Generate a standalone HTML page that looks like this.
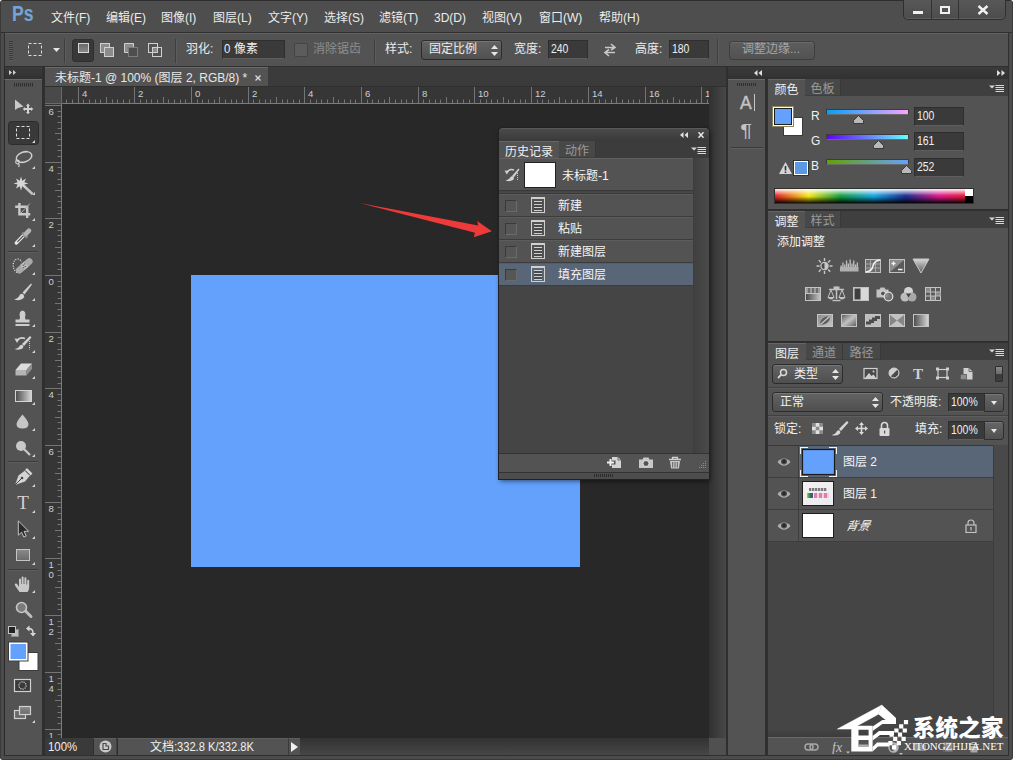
<!DOCTYPE html>
<html lang="zh-CN">
<head>
<meta charset="utf-8">
<title>Photoshop</title>
<style>
*{box-sizing:border-box;margin:0;padding:0}
html,body{width:1013px;height:760px;overflow:hidden;background:#fff}
body{font-family:"Liberation Sans","Noto Sans CJK SC",sans-serif;font-size:12px;color:#e6e6e6;position:relative}
.a{position:absolute}
.t{position:absolute;white-space:nowrap;line-height:14px;font-size:12px}
#win{left:0;top:0;width:1013px;height:760px;background:#4c4c4c;border:1px solid #3a3a3a;border-top-color:#2e2e2e;border-radius:3px}
#work{left:4px;top:66px;width:1005px;height:690px;background:#2f2f2f}
/* menu bar */
#menubar{left:1px;top:1px;width:1011px;height:32px;background:#4e4e4e;border-bottom:1px solid #2f2f2f}
#menubar .t{top:10px;color:#ececec}
#optbar{left:5px;top:33px;width:1003px;height:33px;background:#535353;border-top:1px solid #626262;box-shadow:-1px 0 0 #2f2f2f,1px 0 0 #2f2f2f}
#optbar .t{top:8px;color:#ececec}
.inp{position:absolute;background:#3a3a3a;border:1px solid #2e2e2e;border-bottom-color:#5e5e5e;height:19px;top:6px;color:#f0f0f0;font-size:12px;line-height:17px;padding-left:2px}
.sep{position:absolute;top:5px;width:2px;height:24px;border-left:1px solid #3e3e3e;border-right:1px solid #5d5d5d}
/* toolbox */
#tbhead{left:4px;top:67px;width:38px;height:12px;background:linear-gradient(#3b3b3b,#313131);border-left:1px solid #2a2a2a}
#toolbox{left:4px;top:79px;width:38px;height:676px;background:#535353;border-top:1px solid #6a6a6a;border-left:1px solid #2a2a2a}
/* document */
#tabbar{left:45px;top:67px;width:681px;height:19px;background:#3b3b3b}
#tab{left:45px;top:67px;width:223px;height:19px;background:#535353;border-top:1px solid #6a6a6a}
#rulerh{left:45px;top:87px;width:664px;height:16px;background:#353535}
#rulerv{left:45px;top:87px;width:17px;height:651px;background:#353535}
#canvasbg{left:62px;top:103px;width:647px;height:635px;background:#282828}
#doc{left:191px;top:275px;width:389px;height:292px;background:#64a1fc}
#vscroll{left:709px;top:87px;width:17px;height:651px;background:linear-gradient(90deg,#313131,#484848)}
#statusbar{left:45px;top:738px;width:681px;height:17px;background:#3e3e3e}
/* right dock */
#dockhead{left:728px;top:67px;width:280px;height:12px;background:linear-gradient(#3b3b3b,#313131)}
#iconstrip{left:728px;top:79px;width:37px;height:676px;background:#535353;border-top:1px solid #6a6a6a}
.panel{position:absolute;left:768px;width:240px;background:#535353}
.tabs{position:absolute;left:0;top:0;width:240px;height:17px;background:#3f3f3f}
.tabs .on{position:absolute;top:0;height:17px;background:#535353;color:#f0f0f0;border-top:1px solid #656565}
.tabs .off{position:absolute;top:0;height:16px;background:#484848;color:#9a9a9a;border-right:1px solid #383838}
.tabs span{font-size:12px;line-height:20px;overflow:hidden;text-align:center}
.sel{position:absolute;border:1px solid #2c2c2c;border-radius:3px;background:linear-gradient(#636363,#4f4f4f);box-shadow:inset 0 1px 0 #767676}
.ddb{position:absolute;width:20px;height:19px;border:1px solid #2e2e2e;border-radius:0 3px 3px 0;background:linear-gradient(#666,#505050);box-shadow:inset 0 1px 0 #787878}
.ddb:after{content:"";position:absolute;left:6px;top:7px;border:3.500px solid transparent;border-top:4px solid #e8e8e8;border-bottom:none}
.lrow{position:absolute;left:0;width:225px;height:32px;background:#535353;border-bottom:1px solid #3e3e3e}
.n{display:inline-block;transform:scaleX(.87);transform-origin:0 50%}
.hrow{position:absolute;left:0;width:194px;height:23px;background:#535353;border-bottom:1px solid #3c3c3c;border-top:1px solid #5c5c5c}
.hrow i{position:absolute;left:6px;top:5px;width:12px;height:12px;background:#565656;border:1px solid #3a3a3a;border-right-color:#6a6a6a;border-bottom-color:#6a6a6a}
.hrow b{position:absolute;left:32px;top:2px;width:14px;height:16px;border:1px solid #d0d0d0;border-top-width:2px;background:repeating-linear-gradient(#4a4a4a 0 2px,#d0d0d0 2px 3px);background-clip:content-box;padding:2px 2px 1px 2px}
.hrow .t{left:59px;top:4px;color:#f4f4f4}
</style>
</head>
<body>
<div id="win" class="a"></div>
<div id="work" class="a"></div>

<!-- MENU BAR -->
<div id="menubar" class="a">
<span class="a" id="pslogo" style="left:11px;top:0px;font-size:22px;line-height:26px;font-weight:bold;color:#74a4d9;transform:scaleX(.8);transform-origin:0 50%">Ps</span>
<span class="t" style="left:50px">文件(F)</span>
<span class="t" style="left:105px">编辑(E)</span>
<span class="t" style="left:160px">图像(I)</span>
<span class="t" style="left:212px">图层(L)</span>
<span class="t" style="left:267px">文字(Y)</span>
<span class="t" style="left:323px">选择(S)</span>
<span class="t" style="left:378px">滤镜(T)</span>
<span class="t" style="left:433px">3D(D)</span>
<span class="t" style="left:481px">视图(V)</span>
<span class="t" style="left:538px">窗口(W)</span>
<span class="t" style="left:598px">帮助(H)</span>
<div class="a" id="winbtn" style="left:902px;top:-1px;width:103px;height:20px;border:1px solid #2f2f2f;border-top:none;border-radius:0 0 5px 5px;background:linear-gradient(#585858,#4c4c4c);box-shadow:inset 0 -1px 0 #5e5e5e">
<div class="a" style="left:27px;top:0;width:1px;height:20px;background:#333"></div>
<div class="a" style="left:54px;top:0;width:1px;height:20px;background:#333"></div>
<div class="a" style="left:9px;top:11px;width:10px;height:3px;background:#f0f0f0"></div>
<div class="a" style="left:36px;top:6px;width:10px;height:8px;border:2px solid #f0f0f0"></div>
<svg class="a" style="left:73px;top:5px" width="12" height="10" viewBox="0 0 12 10"><path d="M1.5 1 L10.5 9 M10.5 1 L1.5 9" stroke="#f0f0f0" stroke-width="2.4" fill="none"/></svg>
</div>
</div>

<!-- OPTIONS BAR -->
<div id="optbar" class="a">
<div class="a" style="left:4px;top:7px;width:4px;height:20px;background:repeating-linear-gradient(#3a3a3a 0 1px,#5a5a5a 1px 2px)"></div>
<svg class="a" style="left:22px;top:8px" width="16" height="15" viewBox="0 0 16 15"><rect x="1.5" y="1.5" width="13" height="12" fill="none" stroke="#dcdcdc" stroke-width="1" stroke-dasharray="3 2"/></svg>
<svg class="a" style="left:48px;top:14px" width="7" height="4" viewBox="0 0 7 4"><path d="M0 0H7L3.5 4Z" fill="#e6e6e6"/></svg>
<div class="sep" style="left:59px"></div>
<div class="a" style="left:67px;top:5px;width:22px;height:23px;background:#383838;border:1px solid #2f2f2f;border-radius:3px"></div>
<div class="a" style="left:73px;top:9px;width:11px;height:10px;background:linear-gradient(#6a6a6a,#8a8a8a);border:1px solid #d8d8d8"></div>
<svg class="a" style="left:94px;top:8px" width="16" height="16" viewBox="0 0 16 16"><rect x="1.5" y="1.5" width="9" height="9" fill="#8c8c8c" stroke="#d0d0d0"/><rect x="5.5" y="5.5" width="9" height="9" fill="#8c8c8c" stroke="#d0d0d0"/><rect x="6" y="6" width="4" height="4" fill="#8c8c8c"/></svg>
<svg class="a" style="left:118px;top:8px" width="16" height="16" viewBox="0 0 16 16"><path d="M1.5 1.5H10.5V5.5H5.5V10.5H1.5Z" fill="#8c8c8c" stroke="#d0d0d0"/><rect x="5.5" y="5.5" width="9" height="9" fill="#4e4e4e" stroke="#7d7d7d"/></svg>
<svg class="a" style="left:142px;top:8px" width="16" height="16" viewBox="0 0 16 16"><rect x="1.5" y="1.5" width="9" height="9" fill="none" stroke="#d0d0d0"/><rect x="5.5" y="5.5" width="9" height="9" fill="none" stroke="#d0d0d0"/><rect x="6" y="6" width="4" height="4" fill="#8c8c8c"/></svg>
<div class="sep" style="left:170px"></div>
<span class="t" style="left:181px">羽化:</span>
<div class="inp" style="left:217px;width:63px;padding-left:0"><span class="n" style="transform:scaleX(.95);margin-left:1px">0</span>&nbsp;像素</div>
<div class="a" style="left:289px;top:9px;width:14px;height:14px;background:#5c5c5c;border:1px solid #444;border-radius:2px"></div>
<span class="t" style="left:308px;color:#8e8e8e">消除锯齿</span>
<div class="sep" style="left:369px"></div>
<span class="t" style="left:380px">样式:</span>
<div class="a" style="left:416px;top:6px;width:81px;height:20px;border:1px solid #2c2c2c;border-radius:3px;background:linear-gradient(#636363,#505050);box-shadow:inset 0 1px 0 #757575"></div>
<span class="t" style="left:424px">固定比例</span>
<svg class="a" style="left:486px;top:11px" width="7" height="11" viewBox="0 0 7 11"><path d="M0 4H7L3.5 0Z M0 7H7L3.5 11Z" fill="#e6e6e6"/></svg>
<span class="t" style="left:509px">宽度:</span>
<div class="inp" style="left:543px;width:40px"><span class="n">240</span></div>
<svg class="a" style="left:597px;top:9px" width="16" height="14" viewBox="0 0 16 14"><path d="M3 4.5H12 M9 1L13 4.5L9 7" fill="none" stroke="#c8c8c8" stroke-width="1.6"/><path d="M13 9.5H4 M7 6.5L3 9.5L7 13" fill="none" stroke="#c8c8c8" stroke-width="1.6"/></svg>
<span class="t" style="left:630px">高度:</span>
<div class="inp" style="left:664px;width:40px"><span class="n">180</span></div>
<div class="sep" style="left:712px"></div>
<div class="a" style="left:724px;top:7px;width:86px;height:19px;border:1px solid #3e3e3e;border-radius:3px;background:linear-gradient(#5d5d5d,#525252);box-shadow:inset 0 1px 0 #6a6a6a"></div>
<span class="t" style="left:737px;color:#a4a4a4">调整边缘...</span>
</div>

<!-- TOOLBOX -->
<div id="tbhead" class="a"></div>
<div id="toolbox" class="a"></div>
<!--TOOLS-->
<svg class="a" id="tools" style="left:4px;top:67px" width="38" height="688" viewBox="4 67 38 688">
<defs>
<linearGradient id="gI" x1="0" y1="0" x2="0" y2="1"><stop offset="0" stop-color="#e0e0e0"/><stop offset="1" stop-color="#a8a8a8"/></linearGradient>
<linearGradient id="gH" x1="0" y1="0" x2="1" y2="0"><stop offset="0" stop-color="#4a4a4a"/><stop offset="1" stop-color="#d8d8d8"/></linearGradient>
<linearGradient id="gR" x1="0" y1="0" x2="0" y2="1"><stop offset="0" stop-color="#8a8a8a"/><stop offset="1" stop-color="#6a6a6a"/></linearGradient>
<path id="fly" d="M3 0V3H0Z" fill="#d6d6d6"/>
</defs>
<!-- header chevrons -->
<path d="M9 70L12 72.5L9 75ZM13 70L16 72.5L13 75Z" fill="#d0d0d0"/>
<!-- grip -->
<path d="M14.5 83v3.500M16.500 83v3.500M18.500 83v3.500M20.500 83v3.500M22.500 83v3.500M24.500 83v3.500M26.500 83v3.500M28.500 83v3.500M30.500 83v3.500M32.500 83v3.500" stroke="#2e2e2e" stroke-width="1"/>
<!-- move -->
<path d="M15 99.500L15 110L18 108L23.500 106.500Z" fill="#c9c9c9"/>
<path d="M28 103.500L30 106H29V108H31V107L33.300 109L31 111V110H29V112H30L28 114.300L26 112H27V110H25V111L22.700 109L25 107V108H27V106H26Z" fill="#d2d2d2"/>
<!-- marquee selected -->
<rect x="8.500" y="121.500" width="30" height="23" rx="3" fill="#393939" stroke="#2c2c2c"/>
<rect x="16.500" y="126.500" width="13" height="12" fill="none" stroke="#dedede" stroke-dasharray="3 2"/>
<use href="#fly" x="32" y="140"/>
<!-- lasso -->
<ellipse cx="24" cy="157" rx="8" ry="5" transform="rotate(-18 24 157)" fill="none" stroke="#cfcfcf" stroke-width="1.500"/>
<circle cx="17.500" cy="162" r="1.800" fill="none" stroke="#cfcfcf" stroke-width="1.200"/>
<path d="M18 163.500Q20 165 18.500 167" fill="none" stroke="#cfcfcf" stroke-width="1.200"/>
<use href="#fly" x="32" y="166"/>
<!-- wand -->
<path d="M24 186L32.500 194" stroke="#c4c4c4" stroke-width="2.600"/>
<path d="M21 176.500L22.300 180.800L26 178.500L24.400 182.300L28.500 183.500L24.400 184.600L26 188.500L22.300 186.300L21 190.500L19.700 186.300L16 188.500L17.600 184.600L13.500 183.500L17.600 182.300L16 178.500L19.700 180.800Z" fill="#d6d6d6"/>
<use href="#fly" x="32" y="192"/>
<!-- crop -->
<path d="M19.400 203V214.200H30.300M15.200 206.800H27.200V218" fill="none" stroke="#c9c9c9" stroke-width="2.400"/>
<path d="M21 213L30 203.500" stroke="#a8a8a8" stroke-width="1"/>
<use href="#fly" x="32" y="218"/>
<!-- eyedropper -->
<path d="M16.300 243L24 235" stroke="#e6e6e6" stroke-width="3.400" stroke-linecap="round"/>
<path d="M17.500 241.800L23.500 235.600" stroke="#4a4a4a" stroke-width="1.200"/>
<path d="M22.300 232.600L27.200 237.500" stroke="#8e8e8e" stroke-width="2.600"/>
<path d="M26 233.800L29 230.600" stroke="#b4b4b4" stroke-width="4.600" stroke-linecap="round"/>
<use href="#fly" x="32" y="244"/>
<!-- sep -->
<path d="M8 251.500H38" stroke="#3b3b3b"/><path d="M8 252.500H38" stroke="#5e5e5e"/>
<!-- heal -->
<path d="M17 272.500Q12.500 269 13.300 263.500Q14.500 258.800 18 259Q20.500 259.500 21.500 262" fill="none" stroke="#e8e8e8" stroke-width="1.200" stroke-dasharray="1.100 1.300"/>
<path d="M19.300 270.200L29.300 261.500" stroke="#a9a9a9" stroke-width="6.600" stroke-linecap="round"/>
<path d="M22.300 267.600L26.300 264.100" stroke="#bcbcbc" stroke-width="6.600"/>
<circle cx="23.200" cy="265.200" r=".65" fill="#555"/><circle cx="25.300" cy="266.400" r=".65" fill="#555"/><circle cx="24.700" cy="263.900" r=".65" fill="#555"/><circle cx="23.700" cy="267.700" r=".65" fill="#555"/>
<use href="#fly" x="32" y="272"/>
<!-- brush -->
<path d="M22.500 292.500L31 283.500L32 284.500L24.500 294.500Z" fill="#cfcfcf"/>
<path d="M14 299.500Q18.500 298.500 20 294.500Q21.500 293 23.500 294.500Q25 296.500 23 298.500Q19.500 301.500 14 299.500Z" fill="#d2d2d2"/>
<use href="#fly" x="32" y="298"/>
<!-- stamp -->
<path d="M20 317.500Q18.500 311 22.500 310.500Q26.500 311 25 317.500L25.500 319.500H29.500V322.500H15.500V319.500H19.500Z" fill="#cdcdcd"/>
<rect x="15.500" y="324" width="14" height="2" fill="#cdcdcd"/>
<use href="#fly" x="32" y="324"/>
<!-- history brush -->
<path d="M22 344L30 336L31.500 337.500L24 346Z" fill="#d2d2d2"/>
<path d="M14.500 349Q18.500 348.500 20 345.500Q21.500 344 23 345.500Q24 347 22.500 348.500Q19 350.500 14.500 349Z" fill="#d2d2d2"/>
<path d="M25 338.500Q20 336.500 17 340.500" fill="none" stroke="#d2d2d2" stroke-width="1.600"/>
<path d="M14.500 338.500L19.500 339L17 343Z" fill="#d2d2d2"/>
<path d="M29.500 341V349.500" stroke="#d0d0d0" stroke-width="1" stroke-dasharray="1 1"/>
<use href="#fly" x="32" y="350"/>
<!-- eraser -->
<path d="M15.500 370L21 363.500H32L26.500 370Z" fill="#dcdcdc"/>
<path d="M15.500 370H26.500V375.500H15.500Z" fill="#b4b4b4"/>
<path d="M26.500 370L32 363.500V369L26.500 375.500Z" fill="#8f8f8f"/>
<use href="#fly" x="32" y="376"/>
<!-- gradient -->
<rect x="15.500" y="390.500" width="16" height="11" fill="url(#gH)" stroke="#d4d4d4"/>
<use href="#fly" x="32" y="402"/>
<!-- blur drop -->
<path d="M22.500 414.500Q28.500 421.500 28.500 424Q28.500 428.500 22.500 428.500Q16.500 428.500 16.500 424Q16.500 421.500 22.500 414.500Z" fill="#c6c6c6"/>
<use href="#fly" x="32" y="428"/>
<!-- dodge -->
<path d="M24 449L30 455" stroke="#c8c8c8" stroke-width="2.200"/>
<circle cx="21" cy="446" r="5" fill="#c8c8c8"/>
<use href="#fly" x="32" y="454"/>
<!-- sep -->
<path d="M8 461.500H38" stroke="#3b3b3b"/><path d="M8 462.500H38" stroke="#5e5e5e"/>
<!-- pen -->
<path d="M15 485L18.500 475.500L25 470.500L30 475.500L25 481.500Z" fill="#d4d4d4"/>
<path d="M15 485L21.500 478.500" stroke="#444" stroke-width="1"/>
<circle cx="22" cy="478" r="1.300" fill="#444"/>
<path d="M26 469L31.500 474.500" stroke="#d4d4d4" stroke-width="2.600"/>
<path d="M25.500 471L29.500 475" stroke="#444" stroke-width=".9"/>
<use href="#fly" x="32" y="484"/>
<!-- T -->
<text x="23" y="508.500" font-family="Liberation Serif, serif" font-size="19" fill="#d2d2d2" text-anchor="middle">T</text>
<use href="#fly" x="32" y="510"/>
<!-- path select -->
<path d="M18.300 520.800V535.200L21.600 532.200L23.800 537L26.200 536L24 531.300H28.600Z" fill="#2a2a2a" stroke="#d0d0d0" stroke-width=".9"/>
<use href="#fly" x="32" y="536"/>
<!-- rectangle -->
<rect x="16.500" y="549.500" width="13" height="11" fill="url(#gR)" stroke="#c4c4c4"/>
<use href="#fly" x="32" y="562"/>
<!-- sep -->
<path d="M8 569.500H38" stroke="#3b3b3b"/><path d="M8 570.500H38" stroke="#5e5e5e"/>
<!-- hand -->
<path d="M19.500 592L15 585.500Q14.300 584 15.500 583.600Q16.800 583.400 17.800 585L19 587V579.800Q19 578.600 20 578.600Q21 578.600 21 579.800V584H21.600V577.600Q21.600 576.400 22.600 576.400Q23.600 576.400 23.600 577.600V584H24.400V578.400Q24.400 577.200 25.400 577.200Q26.400 577.200 26.400 578.400V584.500H27.200V581Q27.200 579.800 28.200 579.800Q29.200 579.800 29.200 581V587Q29.200 590 27.500 592Z" fill="#c8c8c8"/>
<use href="#fly" x="32" y="590"/>
<!-- zoom -->
<path d="M25.500 611L31 616.500" stroke="#bdbdbd" stroke-width="3" stroke-linecap="round"/>
<circle cx="21.500" cy="607.500" r="5" fill="#7b7b7b" stroke="#c6c6c6" stroke-width="1.600"/>
<!-- default colors / swap -->
<rect x="11.500" y="629.500" width="7" height="7" fill="#bdbdbd" stroke="#8a8a8a"/>
<rect x="8.500" y="626.500" width="7" height="7" fill="#222" stroke="#c4c4c4"/>
<path d="M28.500 628.500Q33 628.500 33 633" fill="none" stroke="#d8d8d8" stroke-width="1.500"/>
<path d="M26 628.500L29.500 625.500V631.500Z M33 636.500L30 633H36Z" fill="#d8d8d8"/>
<!-- fg/bg -->
<rect x="19" y="652.500" width="19" height="18" fill="#fff" stroke="#3c3c3c" stroke-width="1"/>
<rect x="8.500" y="642" width="19.500" height="19" fill="#fff" stroke="#3c3c3c" stroke-width="1"/>
<rect x="10.500" y="644" width="15.500" height="15" fill="#64a1fc"/>
<!-- quick mask -->
<rect x="14.500" y="679.500" width="16" height="12" fill="#3a3a3a" stroke="#d0d0d0" stroke-width="1.200"/>
<circle cx="22.500" cy="685.500" r="3.600" fill="none" stroke="#f0f0f0" stroke-width="1.100" stroke-dasharray="1.100 1.100"/>
<!-- screen mode -->
<rect x="14.500" y="710.500" width="11" height="8" fill="#6a6a6a" stroke="#d0d0d0" stroke-width="1.200"/>
<rect x="19.500" y="706.500" width="11" height="8" fill="url(#gR)" stroke="#d0d0d0" stroke-width="1.200"/>
<use href="#fly" x="32" y="720"/>
</svg>

<!--/TOOLS-->

<!-- DOCUMENT -->
<div id="tabbar" class="a"></div>
<div id="tab" class="a"><span class="t" style="left:10px;top:3px;color:#e8e8e8">未标题-1 @ 100% (图层 2, RGB/8) *</span><svg class="a" style="left:210px;top:7px" width="6" height="6" viewBox="0 0 6 6"><path d="M.5 .5L5.500 5.500M5.500 .5L.5 5.500" stroke="#dcdcdc" stroke-width="1.300"/></svg></div>
<div id="canvasbg" class="a"></div>
<div id="doc" class="a"></div>
<!--RULER-->
<svg class="a" id="rh" style="left:62px;top:87px" width="647" height="17" viewBox="0 0 647 17">
<rect width="647" height="17" fill="#363636"/>
<path d="M4.5 12.5V16M10.5 12.5V16M16.5 0V16M21.5 12.5V16M27.5 12.5V16M33.5 12.5V16M38.5 12.5V16M44.5 10V16M50.5 12.5V16M55.5 12.5V16M61.5 12.5V16M67.5 12.5V16M72.5 0V16M78.5 12.5V16M84.5 12.5V16M89.5 12.5V16M95.5 12.5V16M101.5 10V16M106.5 12.5V16M112.5 12.5V16M118.5 12.5V16M123.5 12.5V16M129.5 0V16M135.5 12.5V16M140.5 12.5V16M146.5 12.5V16M152.5 12.5V16M157.5 10V16M163.5 12.5V16M169.5 12.5V16M174.5 12.5V16M180.5 12.5V16M186.5 0V16M191.5 12.5V16M197.5 12.5V16M203.5 12.5V16M208.5 12.5V16M214.5 10V16M220.5 12.5V16M225.5 12.5V16M231.5 12.5V16M237.5 12.5V16M242.5 0V16M248.5 12.5V16M254.5 12.5V16M259.5 12.5V16M265.5 12.5V16M271.5 10V16M276.5 12.5V16M282.5 12.5V16M288.5 12.5V16M293.5 12.5V16M299.5 0V16M305.5 12.5V16M310.5 12.5V16M316.5 12.5V16M322.5 12.5V16M327.5 10V16M333.5 12.5V16M339.5 12.5V16M344.5 12.5V16M350.5 12.5V16M356.5 0V16M361.5 12.5V16M367.5 12.5V16M373.5 12.5V16M378.5 12.5V16M384.5 10V16M390.5 12.5V16M395.5 12.5V16M401.5 12.5V16M407.5 12.5V16M412.5 0V16M418.5 12.5V16M424.5 12.5V16M429.5 12.5V16M435.5 12.5V16M441.5 10V16M446.5 12.5V16M452.5 12.5V16M458.5 12.5V16M463.5 12.5V16M469.5 0V16M475.5 12.5V16M480.5 12.5V16M486.5 12.5V16M492.5 12.5V16M497.5 10V16M503.5 12.5V16M509.5 12.5V16M515.5 12.5V16M520.5 12.5V16M526.5 0V16M532.5 12.5V16M537.5 12.5V16M543.5 12.5V16M549.5 12.5V16M554.5 10V16M560.5 12.5V16M566.5 12.5V16M571.5 12.5V16M577.5 12.5V16M583.5 0V16M588.5 12.5V16M594.5 12.5V16M600.5 12.5V16M605.5 12.5V16M611.5 10V16M617.5 12.5V16M622.5 12.5V16M628.5 12.5V16M634.5 12.5V16M639.5 0V16M645.5 12.5V16" stroke="#747474" stroke-width="1" fill="none"/>
<path d="M0 16.5H647" stroke="#7c7c7c" stroke-width="1"/>
<text x="20.0" y="10" font-size="9.6" fill="#cfcfcf" font-family="Liberation Sans, sans-serif">4</text>
<text x="76.0" y="10" font-size="9.6" fill="#cfcfcf" font-family="Liberation Sans, sans-serif">2</text>
<text x="133.0" y="10" font-size="9.6" fill="#cfcfcf" font-family="Liberation Sans, sans-serif">0</text>
<text x="190.0" y="10" font-size="9.6" fill="#cfcfcf" font-family="Liberation Sans, sans-serif">2</text>
<text x="246.0" y="10" font-size="9.6" fill="#cfcfcf" font-family="Liberation Sans, sans-serif">4</text>
<text x="303.0" y="10" font-size="9.6" fill="#cfcfcf" font-family="Liberation Sans, sans-serif">6</text>
<text x="360.0" y="10" font-size="9.6" fill="#cfcfcf" font-family="Liberation Sans, sans-serif">8</text>
<text x="416.0" y="10" font-size="9.6" fill="#cfcfcf" font-family="Liberation Sans, sans-serif">10</text>
<text x="473.0" y="10" font-size="9.6" fill="#cfcfcf" font-family="Liberation Sans, sans-serif">12</text>
<text x="530.0" y="10" font-size="9.6" fill="#cfcfcf" font-family="Liberation Sans, sans-serif">14</text>
<text x="587.0" y="10" font-size="9.6" fill="#cfcfcf" font-family="Liberation Sans, sans-serif">16</text>
<text x="643.0" y="10" font-size="9.6" fill="#cfcfcf" font-family="Liberation Sans, sans-serif">18</text>
</svg>
<svg class="a" id="rv" style="left:45px;top:103px" width="17" height="635" viewBox="0 0 17 635">
<rect width="17" height="635" fill="#363636"/>
<path d="M0 2.5H16M12.5 8.5H16M12.5 13.5H16M12.5 19.5H16M12.5 25.5H16M10 30.5H16M12.5 36.5H16M12.5 42.5H16M12.5 47.5H16M12.5 53.5H16M0 59.5H16M12.5 64.5H16M12.5 70.5H16M12.5 76.5H16M12.5 81.5H16M10 87.5H16M12.5 93.5H16M12.5 98.5H16M12.5 104.5H16M12.5 110.5H16M0 115.5H16M12.5 121.5H16M12.5 127.5H16M12.5 132.5H16M12.5 138.5H16M10 144.5H16M12.5 149.5H16M12.5 155.5H16M12.5 161.5H16M12.5 166.5H16M0 172.5H16M12.5 178.5H16M12.5 183.5H16M12.5 189.5H16M12.5 195.5H16M10 200.5H16M12.5 206.5H16M12.5 212.5H16M12.5 217.5H16M12.5 223.5H16M0 229.5H16M12.5 234.5H16M12.5 240.5H16M12.5 246.5H16M12.5 251.5H16M10 257.5H16M12.5 263.5H16M12.5 268.5H16M12.5 274.5H16M12.5 280.5H16M0 285.5H16M12.5 291.5H16M12.5 297.5H16M12.5 302.5H16M12.5 308.5H16M10 314.5H16M12.5 319.5H16M12.5 325.5H16M12.5 331.5H16M12.5 336.5H16M0 342.5H16M12.5 348.5H16M12.5 353.5H16M12.5 359.5H16M12.5 365.5H16M10 370.5H16M12.5 376.5H16M12.5 382.5H16M12.5 387.5H16M12.5 393.5H16M0 399.5H16M12.5 404.5H16M12.5 410.5H16M12.5 416.5H16M12.5 421.5H16M10 427.5H16M12.5 433.5H16M12.5 438.5H16M12.5 444.5H16M12.5 450.5H16M0 455.5H16M12.5 461.5H16M12.5 467.5H16M12.5 472.5H16M12.5 478.5H16M10 484.5H16M12.5 489.5H16M12.5 495.5H16M12.5 501.5H16M12.5 506.5H16M0 512.5H16M12.5 518.5H16M12.5 523.5H16M12.5 529.5H16M12.5 535.5H16M10 540.5H16M12.5 546.5H16M12.5 552.5H16M12.5 558.5H16M12.5 563.5H16M0 569.5H16M12.5 575.5H16M12.5 580.5H16M12.5 586.5H16M12.5 592.5H16M10 597.5H16M12.5 603.5H16M12.5 609.5H16M12.5 614.5H16M12.5 620.5H16M0 626.5H16M12.5 631.5H16" stroke="#747474" stroke-width="1" fill="none"/>
<path d="M16.5 0V635" stroke="#7c7c7c" stroke-width="1"/>
<text x="3.5" y="12.0" font-size="9.6" fill="#cfcfcf" font-family="Liberation Sans, sans-serif">6</text>
<text x="3.5" y="69.0" font-size="9.6" fill="#cfcfcf" font-family="Liberation Sans, sans-serif">4</text>
<text x="3.5" y="125.0" font-size="9.6" fill="#cfcfcf" font-family="Liberation Sans, sans-serif">2</text>
<text x="3.5" y="182.0" font-size="9.6" fill="#cfcfcf" font-family="Liberation Sans, sans-serif">0</text>
<text x="3.5" y="239.0" font-size="9.6" fill="#cfcfcf" font-family="Liberation Sans, sans-serif">2</text>
<text x="3.5" y="295.0" font-size="9.6" fill="#cfcfcf" font-family="Liberation Sans, sans-serif">4</text>
<text x="3.5" y="352.0" font-size="9.6" fill="#cfcfcf" font-family="Liberation Sans, sans-serif">6</text>
<text x="3.5" y="409.0" font-size="9.6" fill="#cfcfcf" font-family="Liberation Sans, sans-serif">8</text>
<text x="3.5" y="465.0" font-size="9.6" fill="#cfcfcf" font-family="Liberation Sans, sans-serif">1</text>
<text x="3.5" y="474.5" font-size="9.6" fill="#cfcfcf" font-family="Liberation Sans, sans-serif">0</text>
<text x="3.5" y="522.0" font-size="9.6" fill="#cfcfcf" font-family="Liberation Sans, sans-serif">1</text>
<text x="3.5" y="531.5" font-size="9.6" fill="#cfcfcf" font-family="Liberation Sans, sans-serif">2</text>
<text x="3.5" y="579.0" font-size="9.6" fill="#cfcfcf" font-family="Liberation Sans, sans-serif">1</text>
<text x="3.5" y="588.5" font-size="9.6" fill="#cfcfcf" font-family="Liberation Sans, sans-serif">4</text>
<text x="3.5" y="636.0" font-size="9.6" fill="#cfcfcf" font-family="Liberation Sans, sans-serif">1</text>
<text x="3.5" y="645.5" font-size="9.6" fill="#cfcfcf" font-family="Liberation Sans, sans-serif">6</text>
</svg>
<!--/RULER-->
<div class="a" id="rcorner" style="left:45px;top:87px;width:17px;height:17px;background:#494949;border-right:1px solid #6a6a6a;border-bottom:1px solid #6a6a6a"></div>
<div id="vscroll" class="a"></div>
<div id="statusbar" class="a">
<div class="a" style="left:0;top:0;width:48px;height:17px;background:#3a3a3a"></div>
<span class="t n" style="left:3px;top:2px;color:#f0f0f0;transform:scaleX(.95)">100%</span>
<div class="a" style="left:48px;top:0;width:23px;height:17px;background:#535353;border-left:1px solid #2e2e2e;border-top:1px solid #5e5e5e"></div>
<svg class="a" style="left:54px;top:2px" width="13" height="13" viewBox="0 0 13 13"><circle cx="6.500" cy="6.500" r="6" fill="#c9c9c9"/><path d="M4 3.500H7V6H9.500V9.500H4Z" fill="none" stroke="#4a4a4a" stroke-width="1.200"/></svg>
<div class="a" style="left:72px;top:0;width:171px;height:17px;background:#535353;border-left:1px solid #2e2e2e;border-top:1px solid #5e5e5e"></div>
<span class="t" style="left:105px;top:2px;color:#f0f0f0">文档:<span class="n" style="transform:scaleX(.93)">332.8 K/332.8K</span></span>
<div class="a" style="left:243px;top:0;width:12px;height:17px;background:#535353;border-left:1px solid #3a3a3a;border-top:1px solid #5e5e5e"></div>
<svg class="a" style="left:246px;top:4px" width="7" height="10" viewBox="0 0 7 10"><path d="M0 0L7 5L0 10Z" fill="#f0f0f0"/></svg>
<div class="a" style="left:255px;top:0;width:409px;height:17px;background:linear-gradient(#323232,#474747)"></div>
<div class="a" style="left:664px;top:0;width:17px;height:17px;background:#505050"></div>
</div>

<!-- RIGHT DOCK -->
<div id="dockhead" class="a"></div>
<div id="iconstrip" class="a"></div>

<!-- COLOR PANEL -->
<div class="panel" id="pcolor" style="top:79px;height:130px">
<!--PCOLOR-->
<div class="tabs"><span class="on" style="left:0;width:37px">颜色</span><span class="off" style="left:37px;width:36px">色板</span>
<svg class="a" style="left:221px;top:5px" width="15" height="9" viewBox="0 0 15 9"><path d="M0 1.500H6L3 4.500Z" fill="#d8d8d8"/><path d="M6.500 1.500H15M6.500 3.500H15M6.500 5.500H15M6.500 7.500H15" stroke="#d8d8d8" stroke-width="1"/></svg></div>
<div class="a" style="left:15px;top:38px;width:20px;height:19px;background:#fff;border:1px solid #3a3a3a"></div>
<div class="a" style="left:5px;top:28px;width:20px;height:19px;background:#64a1fc;border:1px solid #fff;box-shadow:inset 0 0 0 1px #1e1e1e;outline:1px solid #8c8660"></div>
<span class="t" style="left:43px;top:30px;color:#f0f0f0">R</span>
<span class="t" style="left:43px;top:55px;color:#f0f0f0">G</span>
<span class="t" style="left:43px;top:80px;color:#f0f0f0">B</span>
<div class="a" style="left:58px;top:30px;width:83px;height:6px;background:linear-gradient(90deg,#00a1fc,#ffa1fc);border:1px solid #3c3c3c;border-bottom-color:#6a6a6a"></div>
<div class="a" style="left:58px;top:55px;width:83px;height:6px;background:linear-gradient(90deg,#6400fc,#64fffc);border:1px solid #3c3c3c;border-bottom-color:#6a6a6a"></div>
<div class="a" style="left:58px;top:80px;width:83px;height:6px;background:linear-gradient(90deg,#64a100,#64a1ff);border:1px solid #3c3c3c;border-bottom-color:#6a6a6a"></div>
<svg class="a" style="left:85px;top:36px" width="11" height="9" viewBox="0 0 11 9"><path d="M5.500 .5L10.500 5.500V8.500H.5V5.500Z" fill="#b9b9b9" stroke="#3a3a3a"/></svg>
<svg class="a" style="left:105px;top:61px" width="11" height="9" viewBox="0 0 11 9"><path d="M5.500 .5L10.500 5.500V8.500H.5V5.500Z" fill="#b9b9b9" stroke="#3a3a3a"/></svg>
<svg class="a" style="left:133px;top:86px" width="11" height="9" viewBox="0 0 11 9"><path d="M5.500 .5L10.500 5.500V8.500H.5V5.500Z" fill="#b9b9b9" stroke="#3a3a3a"/></svg>
<div class="inp" style="left:146px;top:28px;width:50px"><span class="n">100</span></div>
<div class="inp" style="left:146px;top:53px;width:50px"><span class="n">161</span></div>
<div class="inp" style="left:146px;top:79px;width:50px"><span class="n">252</span></div>
<svg class="a" style="left:11px;top:83px" width="13" height="12" viewBox="0 0 13 12"><path d="M6.500 0L13 12H0Z" fill="#d6d6d6"/><path d="M6.500 4V8.500M6.500 9.500V11" stroke="#333" stroke-width="1.600"/></svg>
<div class="a" style="left:26px;top:82px;width:14px;height:14px;background:#5b98e6;border:1px solid #fff;outline:1px solid #333"></div>
<div class="a" style="left:6px;top:109px;width:200px;height:16px;border:1px solid #2f2f2f;background:linear-gradient(rgba(255,255,255,.95),rgba(255,255,255,0) 48%,rgba(0,0,0,0) 52%,rgba(0,0,0,.92)),linear-gradient(90deg,#ea2128,#f6e616 17%,#16a13f 33%,#18a6e6 50%,#1f2f92 66%,#df1a8c 83%,#e81c24)"></div>
<div class="a" style="left:197px;top:110px;width:8px;height:7px;background:#fff"></div>
<div class="a" style="left:197px;top:117px;width:8px;height:7px;background:#000"></div>

<!--/PCOLOR-->
</div>
<!-- ADJUST PANEL -->
<div class="panel" id="padj" style="top:211px;height:130px">
<!--PADJ-->
<div class="tabs"><span class="on" style="left:0;width:37px">调整</span><span class="off" style="left:37px;width:36px">样式</span>
<svg class="a" style="left:221px;top:5px" width="15" height="9" viewBox="0 0 15 9"><path d="M0 1.500H6L3 4.500Z" fill="#d8d8d8"/><path d="M6.500 1.500H15M6.500 3.500H15M6.500 5.500H15M6.500 7.500H15" stroke="#d8d8d8" stroke-width="1"/></svg></div>
<span class="t" style="left:9px;top:24px;color:#f4f4f4">添加调整</span>
<svg class="a" style="left:0;top:40px" width="240" height="85" viewBox="768 251 240 85">
<defs>
<linearGradient id="aV" x1="0" y1="0" x2="0" y2="1"><stop offset="0" stop-color="#d8d8d8"/><stop offset="1" stop-color="#5a5a5a"/></linearGradient>
<linearGradient id="aH" x1="0" y1="0" x2="1" y2="0"><stop offset="0" stop-color="#4a4a4a"/><stop offset="1" stop-color="#d8d8d8"/></linearGradient>
<linearGradient id="aD" x1="0" y1="0" x2="1" y2="1"><stop offset="0" stop-color="#5a5a5a"/><stop offset=".5" stop-color="#c2c2c2"/><stop offset="1" stop-color="#5a5a5a"/></linearGradient>
<linearGradient id="aHd" x1="0" y1="0" x2="1" y2="0"><stop offset="0" stop-color="#444"/><stop offset="1" stop-color="#c8c8c8"/></linearGradient><linearGradient id="aV2" x1="0" y1="0" x2="1" y2="1"><stop offset="0" stop-color="#8a8a8a"/><stop offset="1" stop-color="#c8c8c8"/></linearGradient>
</defs>
<!-- row1: brightness -->
<g stroke="#c8c8c8" stroke-width="1.400"><path d="M824.500 258v3M824.500 271v3M816.500 266h3M829.500 266h3M818.800 260.300l2.100 2.100M828.100 269.600l2.100 2.100M830.200 260.300l-2.100 2.100M820.900 269.600l-2.100 2.100"/></g>
<circle cx="824.500" cy="266" r="3.600" fill="#4a4a4a" stroke="#c8c8c8" stroke-width="1.200"/><path d="M824.500 262.400A3.600 3.600 0 0 1 824.500 269.600Z" fill="#c8c8c8"/>
<!-- levels -->
<path d="M840.5 269.5v-4h1.300v4zM842.3 269.5v-7h1.300v7zM844.1 269.5v-5h1.300v5zM845.9 269.5v-9h1.300v9zM847.7 269.5v-6h1.300v6zM849.5 269.5v-10h1.300v10zM851.3 269.5v-6h1.300v6zM853.1 269.5v-9h1.300v9zM854.9 269.5v-5h1.300v5zM856.7 269.5v-7h1.300v7z" fill="#c0c0c0"/>
<path d="M840 267h18.500v4.500H840z" fill="#b0b0b0"/>
<!-- curves -->
<rect x="865.500" y="259.500" width="15" height="13" fill="#6e6e6e" stroke="#c2c2c2"/>
<path d="M865.500 264h15M865.500 268h15M870.500 259.500v13M875.500 259.500v13" stroke="#b0b0b0" stroke-width=".8"/>
<path d="M866 272Q872 271 873 266T880 260" fill="none" stroke="#f0f0f0" stroke-width="1.500"/>
<!-- exposure -->
<rect x="889.500" y="259.500" width="15" height="13" fill="#8c8c8c" stroke="#c2c2c2"/>
<path d="M890 272L904 260V272Z" fill="#5a5a5a"/>
<path d="M891.500 263.500h4M893.500 261.500v4M898 269.500h4.500" stroke="#f4f4f4" stroke-width="1.300"/>
<!-- vibrance -->
<path d="M913 259H929L921 273Z" fill="url(#aV)" stroke="#c8c8c8" stroke-width="1"/>
<!-- row2: hue/sat -->
<rect x="805.500" y="287.500" width="15" height="13" fill="url(#aHd)" stroke="#c4c4c4"/>
<rect x="806" y="288" width="14" height="5" fill="#9a9a9a"/>
<path d="M808 288h2v5h-2zM812 288h2v5h-2zM816 288h2v5h-2z" fill="#6c6c6c"/>
<path d="M806 293.500H820" stroke="#c4c4c4" stroke-width="1"/>
<!-- balance -->
<path d="M836.500 286.500V299M829 289.500H844" stroke="#c2c2c2" stroke-width="1.500"/>
<path d="M833.500 286.500h6v2.500h-6z" fill="#c2c2c2"/>
<path d="M831 290L828 297.500H834ZM842 290L839 297.500H845Z" fill="none" stroke="#c2c2c2" stroke-width="1"/>
<path d="M827.500 297.500H834.500Q831 301.500 827.500 297.500ZM838.500 297.500H845.500Q842 301.500 838.500 297.500Z" fill="#c2c2c2"/>
<path d="M832.500 300.500H840.500" stroke="#c2c2c2" stroke-width="1.400"/>
<!-- b&w -->
<rect x="853.500" y="287.500" width="15" height="13" fill="#d8d8d8" stroke="#c2c2c2"/>
<rect x="854.500" y="288.500" width="6" height="11" fill="#3e3e3e"/>
<!-- photo filter -->
<path d="M876.500 289.500h3l1 -2h4l1 2h3v8h-12z" fill="#c2c2c2"/>
<circle cx="883" cy="293.500" r="2.500" fill="#555" stroke="#eee" stroke-width=".8"/>
<circle cx="888.500" cy="296.500" r="4.300" fill="#7a7a7a" fill-opacity=".8" stroke="#dcdcdc" stroke-width="1.200"/>
<!-- channel mixer -->
<circle cx="908.500" cy="291.500" r="4.500" fill="#d4d4d4"/>
<circle cx="905" cy="297" r="4.500" fill="#bdbdbd"/>
<circle cx="912" cy="297" r="4.500" fill="#a8a8a8"/>
<path d="M906 293.500h5l-2.500 4z" fill="#444"/>
<!-- color lookup -->
<rect x="925.500" y="287.500" width="15" height="13" fill="#5a5a5a" stroke="#c4c4c4"/>
<path d="M926 288h4.500v4H926zM935.500 292h5v4h-5zM930.500 296h5v4h-5z" fill="#8a8a8a"/>
<path d="M925.500 292h15M925.500 296h15M930.500 287.500v13M935.500 287.500v13" stroke="#bdbdbd" stroke-width="1.100"/>
<!-- row3: invert -->
<rect x="817.500" y="314.500" width="15" height="12" fill="url(#aV2)" stroke="#c4c4c4"/>
<ellipse cx="825" cy="320.500" rx="5.500" ry="3.200" transform="rotate(-35 825 320.500)" fill="#5c5c5c"/>
<path d="M821 324L829 317" stroke="#c8c8c8" stroke-width="1.200"/>
<!-- posterize -->
<rect x="841.500" y="314.500" width="15" height="12" fill="url(#aD)" stroke="#c2c2c2"/>
<!-- threshold -->
<rect x="865.500" y="314.500" width="15" height="12" fill="#bdbdbd" stroke="#c4c4c4"/>
<path d="M866 324.500V321.500h3v-2h3v-2h3v-1.500h5V319h-3v2h-3v2h-3v1.500Z" fill="#4c4c4c"/>
<!-- selective color -->
<rect x="889.500" y="314.500" width="15" height="12" fill="#c2c2c2" stroke="#c4c4c4"/>
<path d="M890 315L897 320.500L890 326ZM904 315L897 320.500L904 326Z" fill="#868686"/>
<!-- gradient map -->
<rect x="913.500" y="314.500" width="15" height="12" fill="url(#aH)" stroke="#c2c2c2"/>
</svg>

<!--/PADJ-->
</div>
<!-- LAYERS PANEL -->
<div class="panel" id="player" style="top:343px;height:412px">
<!--PLAYER-->
<div class="tabs"><span class="on" style="left:0;width:38px">图层</span><span class="off" style="left:38px;width:37px">通道</span><span class="off" style="left:75px;width:38px">路径</span>
<svg class="a" style="left:221px;top:5px" width="15" height="9" viewBox="0 0 15 9"><path d="M0 1.500H6L3 4.500Z" fill="#d8d8d8"/><path d="M6.500 1.500H15M6.500 3.500H15M6.500 5.500H15M6.500 7.500H15" stroke="#d8d8d8" stroke-width="1"/></svg></div>
<!-- filter row -->
<div class="sel" style="left:4px;top:21px;width:71px;height:20px"></div>
<svg class="a" style="left:9px;top:25px" width="11" height="11" viewBox="0 0 11 11"><circle cx="6.500" cy="4.500" r="3" fill="none" stroke="#d8d8d8" stroke-width="1.500"/><path d="M4.300 6.700L1 10" stroke="#d8d8d8" stroke-width="1.800"/></svg>
<span class="t" style="left:26px;top:24px;color:#f0f0f0">类型</span>
<svg class="a" style="left:64px;top:26px" width="7" height="11" viewBox="0 0 7 11"><path d="M0 4H7L3.500 0Z M0 7H7L3.500 11Z" fill="#e6e6e6"/></svg>
<svg class="a" style="left:95px;top:24px" width="110" height="14" viewBox="863 367 110 14">
<rect x="864" y="368.500" width="13" height="10" fill="#4a4a4a" stroke="#cfcfcf" stroke-width="1.200"/><path d="M865 378L869 373L871.500 376L873.500 374.500L876 378Z" fill="#cfcfcf"/><circle cx="873.500" cy="371.500" r="1" fill="#cfcfcf"/>
<circle cx="894" cy="373" r="5" fill="#cfcfcf"/><path d="M897.500 369.500A5 5 0 0 1 890.500 376.500Z" fill="#4a4a4a"/><circle cx="894" cy="373" r="5" fill="none" stroke="#cfcfcf" stroke-width="1"/>
<text x="918" y="379" font-family="Liberation Serif, serif" font-weight="bold" font-size="15" fill="#cfcfcf" text-anchor="middle">T</text>
<rect x="938" y="369.500" width="9" height="8" fill="none" stroke="#cfcfcf" stroke-width="1.200"/><path d="M936 367.500h3v3h-3zM946 367.500h3v3h-3zM936 376.500h3v3h-3zM946 376.500h3v3h-3z" fill="#cfcfcf"/>
<path d="M963.500 368H969L972.500 371.500V379.500H966.500V374.500H963.500Z" fill="#d0d0d0"/><path d="M969 368V371.500H972.500" fill="none" stroke="#555" stroke-width=".8"/><rect x="960.500" y="374.500" width="6" height="5" fill="#8e8e8e" stroke="#555" stroke-width=".6"/>
</svg>
<div class="a" style="left:227px;top:23px;width:8px;height:16px;border:1px solid #2e2e2e;border-radius:1px;background:linear-gradient(#8a8a8a 0,#6a6a6a 50%,#3c3c3c 50%,#3c3c3c)"></div>
<div class="a" style="left:0;top:44px;width:240px;height:2px;background:#404040;border-bottom:1px solid #5d5d5d"></div>
<!-- blend row -->
<div class="sel" style="left:4px;top:49px;width:111px;height:20px"></div>
<span class="t" style="left:12px;top:52px;color:#f0f0f0">正常</span>
<svg class="a" style="left:104px;top:54px" width="7" height="11" viewBox="0 0 7 11"><path d="M0 4H7L3.500 0Z M0 7H7L3.500 11Z" fill="#e6e6e6"/></svg>
<span class="t" style="left:122px;top:52px;color:#f0f0f0">不透明度:</span>
<div class="inp" style="left:180px;top:50px;width:37px;height:19px"><span class="n">100%</span></div>
<div class="ddb" style="left:216px;top:50px"></div>
<div class="a" style="left:0;top:72px;width:240px;height:2px;background:#404040;border-bottom:1px solid #5d5d5d"></div>
<!-- lock row -->
<span class="t" style="left:6px;top:79px;color:#f0f0f0">锁定:</span>
<svg class="a" style="left:43px;top:77px" width="82" height="18" viewBox="811 420 82 18">
<rect x="812" y="423" width="11" height="11" fill="#e0e0e0"/><path d="M812 423h3.700v3.700h-3.700zM819.300 423h3.700v3.700h-3.700zM815.700 426.700h3.600v3.600h-3.600zM812 430.300h3.700v3.700h-3.700zM819.300 430.300h3.700v3.700h-3.700z" fill="#8a8a8a"/>
<path d="M839 429L847 421L848.500 422.500L841 431Z" fill="#d8d8d8"/><path d="M831.500 435Q835.500 434.500 837 431Q838.500 429.500 840 431Q841 432.500 839.500 434Q836 436.500 831.500 435Z" fill="#d8d8d8"/>
<path d="M861.500 422L864 425H862.300V427.700H865V426L868 428.500L865 431V429.300H862.300V432H864L861.500 435L859 432H860.700V429.300H858V431L855 428.500L858 426V427.700H860.700V425H859Z" fill="#d8d8d8"/>
<rect x="879.500" y="428" width="10" height="8" rx="1" fill="#d8d8d8"/><path d="M881.500 428V425.500Q881.500 422.500 884.500 422.500Q887.500 422.500 887.500 425.500V428" fill="none" stroke="#d8d8d8" stroke-width="1.600"/><rect x="884" y="430.500" width="1.200" height="3" fill="#555"/>
</svg>
<span class="t" style="left:147px;top:79px;color:#f0f0f0">填充:</span>
<div class="inp" style="left:180px;top:78px;width:37px;height:19px"><span class="n">100%</span></div>
<div class="ddb" style="left:216px;top:78px"></div>
<!-- list -->
<div class="a" style="left:0;top:102px;width:240px;height:292px;background:#454545;border-top:1px solid #383838"></div>
<div class="a" style="left:225px;top:102px;width:15px;height:292px;background:#494949;border-left:1px solid #3c3c3c"></div>
<div class="lrow" style="top:103px;background:#596678"></div>
<div class="lrow" style="top:135px"></div>
<div class="lrow" style="top:167px"></div>
<div class="a" style="left:0;top:103px;width:30px;height:31px;background:#535353"></div><div class="a" style="left:30px;top:103px;width:1px;height:96px;background:#3e3e3e"></div>
<svg class="a eye" style="left:9px;top:114px" width="14" height="10" viewBox="0 0 14 10"><path d="M.5 5Q7 -2.500 13.500 5Q7 12.500 .5 5Z" fill="#adadad"/><circle cx="7" cy="4.600" r="3" fill="#4a4a4a"/><circle cx="7" cy="4.600" r="1.500" fill="#222"/></svg>
<svg class="a eye" style="left:9px;top:146px" width="14" height="10" viewBox="0 0 14 10"><path d="M.5 5Q7 -2.500 13.500 5Q7 12.500 .5 5Z" fill="#adadad"/><circle cx="7" cy="4.600" r="3" fill="#4a4a4a"/><circle cx="7" cy="4.600" r="1.500" fill="#222"/></svg>
<svg class="a eye" style="left:9px;top:178px" width="14" height="10" viewBox="0 0 14 10"><path d="M.5 5Q7 -2.500 13.500 5Q7 12.500 .5 5Z" fill="#adadad"/><circle cx="7" cy="4.600" r="3" fill="#4a4a4a"/><circle cx="7" cy="4.600" r="1.500" fill="#222"/></svg>
<!-- thumbs -->
<svg class="a" style="left:32px;top:104px" width="37" height="30" viewBox="0 0 37 30"><path d="M.5 7V.5H8M29 .5H36.500V7M36.500 23V29.500H29M8 29.500H.5V23" fill="none" stroke="#f4f4f4" stroke-width="1.200"/><rect x="2.500" y="2.500" width="32" height="25" fill="#64a1fc" stroke="#1c1c1c" stroke-width="1.200"/></svg>
<div class="a" style="left:34px;top:138px;width:32px;height:25px;background:linear-gradient(135deg,#f3f1f1,#ecebee);border:1px solid #1e1e1e"></div>
<div class="a" style="left:41px;top:145px;width:18px;height:3px;background:repeating-linear-gradient(90deg,#555 0 2px,#bbb 2px 3px);opacity:.75"></div>
<div class="a" style="left:39px;top:150px;width:6px;height:5px;background:linear-gradient(90deg,#c8c832,#2a8a3a 45%,#2a50a0)"></div>
<div class="a" style="left:46px;top:150px;width:15px;height:5px;background:repeating-linear-gradient(90deg,#e0609a 0 3px,#f3c8dc 3px 5px);opacity:.8"></div>
<div class="a" style="left:34px;top:170px;width:32px;height:25px;background:#fff;border:1px solid #1e1e1e"></div>
<span class="t" style="left:75px;top:112px;color:#f4f4f4">图层 2</span>
<span class="t" style="left:75px;top:144px;color:#f4f4f4">图层 1</span>
<span class="t" style="left:78px;top:176px;color:#f4f4f4;font-style:italic;transform:skewX(-12deg)">背景</span>
<svg class="a" style="left:197px;top:176px" width="12" height="14" viewBox="0 0 12 14"><rect x="1" y="6" width="10" height="7.500" fill="none" stroke="#c4c4c4" stroke-width="1.200"/><path d="M3 6V4Q3 1 6 1Q9 1 9 4V6" fill="none" stroke="#c4c4c4" stroke-width="1.200"/><rect x="5.400" y="8" width="1.200" height="3.500" fill="#c4c4c4"/></svg>
<!-- bottom bar -->
<div class="a" style="left:0;top:386px;width:225px;height:8px;background:linear-gradient(#454545,#3c3c3c)"></div><div class="a" style="left:0;top:394px;width:240px;height:18px;background:#535353;border-top:1px solid #6a6a6a"></div>
<svg class="a" style="left:36px;top:399px" width="80" height="12" viewBox="0 0 80 12"><rect x="1" y="2" width="8" height="6" rx="3" fill="none" stroke="#a8a8a8" stroke-width="1.400"/><rect x="6" y="2" width="8" height="6" rx="3" fill="none" stroke="#a8a8a8" stroke-width="1.400"/>
<text x="28" y="10" font-family="Liberation Serif, serif" font-style="italic" font-size="14" fill="#c0c0c0">fx</text><path d="M42 9.500h4l-2 2z" fill="#c0c0c0"/></svg>

<!--/PLAYER-->
</div>

<!-- HISTORY PANEL (floating) -->
<!--DOCK-->
<svg class="a" style="left:728px;top:67px" width="280" height="88" viewBox="728 67 280 88">
<path d="M757.500 70V76L754 73ZM762 70V76L758.500 73Z" fill="#e0e0e0"/>
<path d="M997 70V76L1000.500 73ZM1001.500 70V76L1005 73Z" fill="#e0e0e0"/>
<path d="M737.500 83v3M739.500 83v3M741.500 83v3M743.500 83v3M745.500 83v3M747.500 83v3M749.500 83v3M751.500 83v3M753.500 83v3M755.500 83v3" stroke="#2e2e2e" stroke-width="1"/>
<text x="740" y="109" font-family="Liberation Sans, sans-serif" font-size="17.500" fill="#c4c4c4" stroke="#c4c4c4" stroke-width=".4">A</text>
<path d="M754.500 94V111" stroke="#c4c4c4" stroke-width="1"/>
<text transform="translate(740.300 137) scale(1.22 1)" font-family="Liberation Sans, sans-serif" font-size="18" fill="#c4c4c4">¶</text>
<path d="M731 147.500H763" stroke="#3b3b3b"/><path d="M731 148.500H763" stroke="#5e5e5e"/>
</svg>
<!-- watermark -->
<svg class="a" id="wm2" style="left:800px;top:738px" width="190" height="17" viewBox="800 738 190 17">
<circle cx="893.500" cy="747.500" r="4.500" fill="none" stroke="#b8b8b8" stroke-width="1.400"/><path d="M893.500 743A4.500 4.500 0 0 1 893.500 752Z" fill="#b8b8b8"/><path d="M899 753h4l-2 2z" fill="#c0c0c0"/>
<path d="M914 743h5l1 1.500h6V751H914Z" fill="#8e8e8e"/>
<path d="M943.500 742.500H952.500V751.500H943.500Z" fill="#8a8a8a"/><path d="M943.500 749L946 751.500H943.500Z" fill="#555"/>
<path d="M969 744.500H979M972 744V742.500H976V744" fill="none" stroke="#b0b0b0" stroke-width="1.200"/><path d="M970 746H978L977.300 752.500H970.700Z" fill="#a8a8a8"/>
</svg>
<svg class="a" id="wm" style="left:834px;top:702px" width="174" height="53" viewBox="834 702 174 53">
<g fill="#fff">
<path d="M837.500 729L882 705L878.400 714.200L851.300 729Z" stroke="#fff" stroke-width=".6"/>
<path d="M882 705L896 718V724H882.400L872.600 731V726.600L882.400 720H885.500L878.400 714.200Z"/>
<path d="M851.300 727H858.500V751.500H851.300ZM851.300 725.800H872.600V729.800H851.300ZM868.600 725.800H872.600V751.500H868.600ZM851.300 735.500H872.600V740H851.300ZM851.300 746.600H872.600V751.500H851.300Z"/>
<path d="M872.600 736L879 731H894V735H880L872.600 740.500Z"/>
<path d="M872.600 747L877 742.600H889V746.600H878L872.600 751.500Z"/>
<path d="M903.9 720.0h4.2v4.2h-4.2zM899.1 724.2h4.2v4.2h-4.2zM894.3 728.4h4.2v4.2h-4.2zM902.7 728.4h4.2v4.2h-4.2zM889.5 732.6h4.2v4.2h-4.2zM897.9 732.6h4.2v4.2h-4.2zM893.1 736.8h4.2v4.2h-4.2zM901.5 736.8h4.2v4.2h-4.2zM888.3 741.0h4.2v4.2h-4.2zM896.7 741.0h4.2v4.2h-4.2zM891.9 745.2h4.2v4.2h-4.2z"/>
</g>
<rect x="858.500" y="744.500" width="10.100" height="2.100" fill="#b0b0b0"/>
<text x="912.500" y="735.500" font-family="Noto Sans CJK SC, sans-serif" font-weight="900" font-size="22.600" fill="#fff" textLength="91" lengthAdjust="spacingAndGlyphs">系统之家</text>
<text x="904" y="750.300" font-family="Liberation Serif, serif" font-size="9.500" fill="#fff" textLength="99.500" lengthAdjust="spacingAndGlyphs">XITONGZHIJIA.NET</text>
</svg>

<!--/DOCK-->
<!--HIST-->
<div class="a" id="history" style="left:499px;top:128px;width:210px;height:351px;background:#454545;border-radius:4px 4px 0 0;box-shadow:0 0 0 1px #222,1px 2px 5px rgba(0,0,0,.55);overflow:hidden">
<div class="a" style="left:0;top:0;width:210px;height:13px;background:linear-gradient(#4a4a4a,#3a3a3a);border-top:1px solid #5a5a5a;border-radius:4px 4px 0 0"></div>
<svg class="a" style="left:181px;top:4px" width="26" height="6" viewBox="0 0 26 6"><path d="M3.500 0V6L0 3ZM8 0V6L4.500 3Z" fill="#e0e0e0"/><path d="M18.500 .3L23.500 5.700M23.500 .3L18.500 5.700" stroke="#e8e8e8" stroke-width="1.500"/></svg>
<div class="tabs" style="top:13px;width:210px;background:#3c3c3c"><span class="on" style="left:0;width:60px">历史记录</span><span class="off" style="left:60px;width:37px">动作</span>
<svg class="a" style="left:192px;top:5px" width="15" height="9" viewBox="0 0 15 9"><path d="M0 1.500H6L3 4.500Z" fill="#d8d8d8"/><path d="M6.500 1.500H15M6.500 3.500H15M6.500 5.500H15M6.500 7.500H15" stroke="#d8d8d8" stroke-width="1"/></svg></div>
<div class="a" style="left:194px;top:30px;width:16px;height:295px;background:linear-gradient(90deg,#404040,#4a4a4a);border-left:1px solid #3e3e3e"></div>
<!-- snapshot row -->
<div class="a" style="left:0;top:30px;width:194px;height:33px;background:#535353;border-top:1px solid #626262;border-bottom:1px solid #383838"></div>
<svg class="a" style="left:5px;top:39px" width="16" height="15" viewBox="0 0 16 15"><path d="M8 9L14.500 1.500L15.500 2.500L9.800 10.500Z" fill="#d2d2d2"/><path d="M1.500 13.500Q5 13 6.500 10Q8 8.500 9.500 10Q10.500 11.500 9 13Q6 15 1.500 13.500Z" fill="#d2d2d2"/><path d="M10 3Q5.500 1.500 3 5" fill="none" stroke="#d2d2d2" stroke-width="1.500"/><path d="M.5 3.500L5 4L2.800 7.500Z" fill="#d2d2d2"/><path d="M13.500 6V14" stroke="#d0d0d0" stroke-dasharray="1 1"/></svg>
<div class="a" style="left:25px;top:34px;width:32px;height:26px;background:#fff;border:1px solid #222"></div>
<span class="t" style="left:63px;top:41px;color:#f4f4f4">未标题-1</span>
<div class="a" style="left:0;top:64px;width:194px;height:2px;background:#4a4a4a;border-bottom:1px solid #383838"></div>
<!-- rows -->
<div class="hrow" style="top:66px"><i></i><b></b><span class="t">新建</span></div>
<div class="hrow" style="top:89px"><i></i><b></b><span class="t">粘贴</span></div>
<div class="hrow" style="top:112px"><i></i><b></b><span class="t">新建图层</span></div>
<div class="hrow" style="top:135px;background:#596678"><i></i><b></b><span class="t">填充图层</span></div>
<!-- bottom -->
<div class="a" style="left:0;top:325px;width:210px;height:19px;background:#535353;border-top:1px solid #333"></div>
<svg class="a" style="left:107px;top:328px" width="76" height="13" viewBox="606 456 76 13">
<path d="M612 457H618L621 460V468H612V464.500H615.500V460.500H612Z" fill="#d4d4d4"/><path d="M618 457V460H621" fill="none" stroke="#555" stroke-width=".8"/><path d="M607 462.500H614M610.500 459V466" stroke="#f0f0f0" stroke-width="2"/>
<path d="M639 459.500H642.500L643.500 457.500H648.500L649.500 459.500H653V468H639Z" fill="#c8c8c8"/><circle cx="646" cy="463.500" r="3" fill="#555" stroke="#e8e8e8" stroke-width=".9"/>
<path d="M669 459.500H681M672.500 459V457.500H677.500V459" fill="none" stroke="#d0d0d0" stroke-width="1.300"/><path d="M670 461H680L679 468.500H671Z" fill="#c8c8c8"/><path d="M672.700 462V467.500M675 462V467.500M677.300 462V467.500" stroke="#555" stroke-width=".9"/>
</svg>
<svg class="a" style="left:198px;top:332px" width="10" height="10" viewBox="0 0 10 10"><path d="M8.500 1v1M6.500 3v1M8.500 3v1M4.500 5v1M6.500 5v1M8.500 5v1M2.500 7v1M4.500 7v1M6.500 7v1M8.500 7v1" stroke="#8e8e8e" stroke-width="1"/></svg>
<div class="a" style="left:0;top:344px;width:210px;height:7px;background:#4d4d4d;border-top:1px solid #333"></div>
<div class="a" style="left:95px;top:346px;width:20px;height:3px;background:repeating-linear-gradient(90deg,#2c2c2c 0 1px,transparent 1px 2px)"></div>
</div>
<svg class="a" id="arrow" style="left:355px;top:198px" width="142" height="44" viewBox="355 198 142 44"><path d="M359.500 203L478.200 225.600L477.200 221L491.800 231.300L473.800 237.300L475 232.800Z" fill="#ee3a3a"/></svg>

<!--/HIST-->

</body>
</html>
